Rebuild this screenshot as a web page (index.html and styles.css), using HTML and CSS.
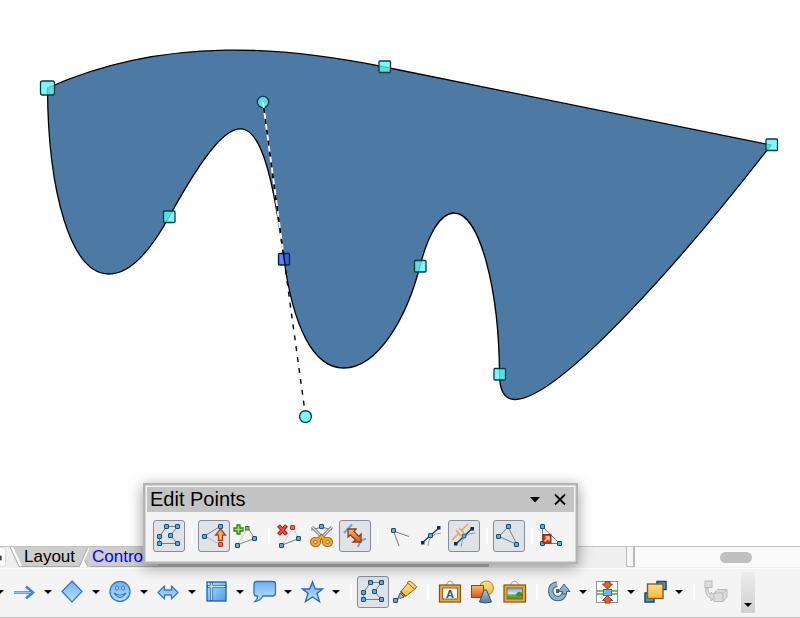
FILE: index.html
```
<!DOCTYPE html>
<html lang="en">
<head>
  <meta charset="utf-8" />
  <meta name="viewport" content="width=device-width,initial-scale=1" />
  <title>Edit Points</title>
  <link rel="stylesheet" href="styles.css">
</head>

<body>
  <!-- shared gradients and symbols -->
  <svg class="defs" aria-hidden="true">
    <defs>
      <linearGradient id="blue" x1="0" y1="0" x2="0" y2="1">
        <stop offset="0" stop-color="#74b2ee"/><stop offset="1" stop-color="#b4e4fb"/>
      </linearGradient>
      <linearGradient id="sky" x1="0" y1="0" x2="1" y2="1">
        <stop offset="0" stop-color="#b5e3fa"/><stop offset="1" stop-color="#4b9ce2"/>
      </linearGradient>
      <linearGradient id="gold" x1="0" y1="0" x2="0" y2="1">
        <stop offset="0" stop-color="#fbe08a"/><stop offset="1" stop-color="#f5b73c"/>
      </linearGradient>
      <linearGradient id="orange" x1="0" y1="0" x2="0" y2="1">
        <stop offset="0" stop-color="#fbbd6c"/><stop offset="1" stop-color="#d9531e"/>
      </linearGradient>
      <linearGradient id="steel" x1="0" y1="0" x2="0" y2="1">
        <stop offset="0" stop-color="#a9c8dd"/><stop offset="1" stop-color="#527b9b"/>
      </linearGradient>
      <linearGradient id="scene" x1="0" y1="0" x2="0" y2="1">
        <stop offset="0" stop-color="#62ace4"/><stop offset=".55" stop-color="#dceef4"/><stop offset=".6" stop-color="#7db549"/><stop offset="1" stop-color="#4b8728"/>
      </linearGradient>
    </defs>
    <symbol id="nd" viewBox="0 0 5 5"><rect x=".5" y=".5" width="4" height="4" rx=".5" fill="#5fa9d3" stroke="#1d4c70"/></symbol>
    <symbol id="nd-red" viewBox="0 0 5 5"><rect x=".5" y=".5" width="4" height="4" rx=".5" fill="#ee6a4c" stroke="#a92f1c"/></symbol>
    <symbol id="points" viewBox="0 0 24 24">
      <path d="M9.500 2.500H20.500L13.500 11.500 20.500 19.500H2.500V12.500Z" fill="none" stroke="#777e86"/>
      <use href="#nd" x="7" y="0" width="5" height="5"/><use href="#nd" x="18" y="0" width="5" height="5"/>
      <use href="#nd" x="11" y="9" width="5" height="5"/><use href="#nd" x="18" y="17" width="5" height="5"/>
      <use href="#nd" x="0" y="17" width="5" height="5"/><use href="#nd" x="0" y="10" width="5" height="5"/>
    </symbol>
  </svg>

  <main class="app">
    <svg class="canvas" viewBox="0 0 800 546" role="img" aria-label="Bezier curve">
      <path class="shape" d="M47.5 88C168 34 290 48 384.5 67L771 145C690 250 560 399.5 515 399.5C505 399.5 499.5 391 499.5 374C499 290 480 213 454 213C440 213 428 235 420 266C408 313 380 368 343.5 368C313 368 293 326 284 259C263 102 241 86 169 217C152 248 131 274 109 274C70 274 48 190 47.5 88Z"/>
      <g class="handle">
        <rect x="40.500" y="81" width="14" height="14" rx="2"/>
        <rect x="379" y="61" width="11.500" height="11.500" rx="1"/>
        <rect x="766" y="139" width="11.500" height="11.500" rx="1"/>
        <rect x="163.500" y="211" width="11.500" height="11.500" rx="1"/>
        <rect x="414.500" y="260.500" width="11.500" height="11.500" rx="1"/>
        <rect x="494" y="368.500" width="11.500" height="11.500" rx="1"/>
        <circle cx="263" cy="102" r="5.700"/>
        <circle cx="305.500" cy="416.500" r="5.900"/>
      </g>
      <g class="handle-lines">
        <path class="under" d="M263 102L284 259"/>
        <path class="dash near" d="M263 102L284 259"/>
        <path class="dash" d="M284 259L305 412"/>
      </g>
      <rect class="selected" x="278.500" y="253.500" width="11" height="11.500" rx="1"/>
      <path d="M279.500 254.500H283.500L284.500 264H279.500Z" fill="#5f88f0"/>
      <path d="M283.500 253.500L285 265" stroke="#05102c" stroke-width="1.500"/>
    </svg>

    <div class="tabbar">
      <button class="tab-end" aria-label="Last layer"><svg viewBox="0 0 5 20"><rect y="8" width="1.500" height="5" fill="#222"/></svg></button>
      <svg class="sep first" viewBox="0 0 14 20"><path d="M3 0H14V20H11Z" fill="#cecece"/><path d="M1 0L10 19.500H14" fill="none" stroke="#aaa"/><path d="M3 0L12 19" fill="none" stroke="#fff" stroke-width="2"/></svg>
      <button class="tab">Layout</button>
      <svg class="sep" viewBox="0 0 12 20"><rect width="12" height="20" fill="#cecece"/><path d="M6 14L2 20H10Z" fill="#f4f4f4"/><path d="M1 20L10 0M6 12L10 20" fill="none" stroke="#aaa"/><path d="M2.500 20L11 1M5 14L8 20" fill="none" stroke="#fff" stroke-width="1.500"/></svg>
      <button class="tab current">Controls</button>
      <div class="tab-rest"></div>
      <div class="tab-space"></div>
      <div class="splitter"></div>
      <div class="scroll"><div class="thumb"></div></div>
    </div>

    <div class="toolbar">
      <button class="caret lead" aria-label="More lines"></button>
      <button class="tool" aria-label="Arrow"><svg viewBox="0 0 24 24"><path d="M2 12.500H20M14 6.500L21 12.500L14 18.500" fill="none" stroke="#3e86d2" stroke-width="2.600"/><path d="M2 12.500H19" stroke="#8cc8f5"/></svg></button>
      <button class="caret" aria-label="Arrow options"></button>
      <button class="tool" aria-label="Basic shapes"><svg viewBox="0 0 24 24"><path d="M12 1L22 11.500L12 22L2 11.500Z" fill="url(#blue)" stroke="#3570b8" stroke-width="1.200"/></svg></button>
      <button class="caret" aria-label="Basic shape options"></button>
      <button class="tool" aria-label="Symbol shapes"><svg viewBox="0 0 24 24"><circle cx="12" cy="11.500" r="10" fill="url(#blue)" stroke="#3b78c0" stroke-width="1.300"/><path d="M6 13Q12 22 18 13Q12 17 6 13Z" fill="#8fcaf3" stroke="#3b78c0" stroke-width="1.200"/><ellipse cx="9" cy="8" rx="1.500" ry="2.200" fill="#a8d7f7" stroke="#3b78c0"/><ellipse cx="15" cy="8" rx="1.500" ry="2.200" fill="#a8d7f7" stroke="#3b78c0"/></svg></button>
      <button class="caret" aria-label="Symbol options"></button>
      <button class="tool" aria-label="Block arrows"><svg viewBox="0 0 24 24"><path d="M2 12.500L8.500 6V10H15.500V6L22 12.500L15.500 19V15H8.500V19Z" fill="url(#blue)" stroke="#3b78c0" stroke-width="1.300" stroke-linejoin="round"/></svg></button>
      <button class="caret" aria-label="Block arrow options"></button>
      <button class="tool" aria-label="Flowchart"><svg viewBox="0 0 24 24"><rect x="3" y="2" width="19" height="19" fill="url(#sky)" stroke="#245fac" stroke-width="1.300"/><path d="M7.500 2V21M3 6.500H22" stroke="#245fac" stroke-width="2.800"/><path d="M7.500 3V20M4 6.500H21" stroke="#c7edff" stroke-width="1.400"/></svg></button>
      <button class="caret" aria-label="Flowchart options"></button>
      <button class="tool" aria-label="Callouts"><svg viewBox="0 0 24 24"><path d="M4.500 1.500H20.500Q23.500 1.500 23.500 4V13Q23.500 16 20.500 16H11Q8 21 3 21.500Q6 19 5.500 16H4.500Q2 16 2 13V4Q2 1.500 4.500 1.500Z" fill="url(#blue)" stroke="#3571b9" stroke-width="1.300"/></svg></button>
      <button class="caret" aria-label="Callout options"></button>
      <button class="tool" aria-label="Stars"><svg viewBox="0 0 24 24"><path d="M12.500 2L15.300 9H22.500L17 13.500L19.500 21.500L12.500 17L5.500 21.500L8 13.500L2.500 9H9.700Z" fill="url(#blue)" stroke="#2d68b5" stroke-width="1.400"/></svg></button>
      <button class="caret" aria-label="Star options"></button>
      <span class="divider"></span>
      <button class="tool on" aria-label="Points" aria-pressed="true"><svg viewBox="0 0 24 24"><use href="#points"/></svg></button>
      <button class="tool" aria-label="Glue points"><svg viewBox="0 0 24 24"><path d="M3 21L7 16" stroke="#637d92" stroke-width="2"/><path d="M7 13L11 17L7 18.500L5.500 17Z" fill="#a6bac9" stroke="#435f75"/><path d="M8 11.500L15 3L22 9L12.500 16.500Z" fill="url(#gold)" stroke="#956115"/><path d="M14 2.500L17 1L23.500 6.500L22 9.500Z" fill="#f9d67c" stroke="#956115"/><path d="M7.500 11.500L12.500 16.500" stroke="#774b14" stroke-width="1.500"/><use href="#nd" x="0" y="18" width="5" height="5"/></svg></button>
      <span class="divider"></span>
      <button class="tool" aria-label="Fontwork"><svg viewBox="0 0 24 24"><path d="M8 5Q12-3 16 5" fill="none" stroke="#9ba3a9"/><rect x="1.500" y="5" width="21" height="17" fill="#e5ab43" stroke="#87500f" stroke-width="1.200"/><rect x="4.500" y="8" width="15" height="11" fill="#f2f8fc" stroke="#9a6320"/><text class="frame-letter" x="12" y="17.500" text-anchor="middle">A</text></svg></button>
      <button class="tool" aria-label="Gallery shapes"><svg viewBox="0 0 24 24"><circle cx="16.500" cy="8" r="7" fill="url(#gold)" stroke="#b9842c"/><rect x="1.500" y="5.500" width="12" height="12" fill="url(#orange)" stroke="#9c401b"/><path d="M14 10H16.500L21.500 22Q15 24 9.500 22Z" fill="url(#steel)" stroke="#2e5673"/></svg></button>
      <button class="tool" aria-label="Insert picture"><svg viewBox="0 0 24 24"><path d="M8 5Q12.500-3 17 5" fill="none" stroke="#9ba3a9"/><rect x="2" y="5" width="21.500" height="17" fill="#e5ab43" stroke="#87500f" stroke-width="1.200"/><rect x="5" y="8" width="15.500" height="11" fill="url(#scene)" stroke="#9a6320"/><path d="M14 14Q17 10 20 13V16H14Z" fill="#4b8728"/></svg></button>
      <span class="divider"></span>
      <button class="tool" aria-label="Rotate"><svg viewBox="0 0 24 24"><path d="M10 4Q3 5.500 3.800 12Q5 18.500 11 18.500Q16.500 18.500 17.500 12" fill="none" stroke="#41637e" stroke-width="5.500"/><path d="M10 4Q3 5.500 3.800 12Q5 18.500 11 18.500Q16.500 18.500 17.500 12" fill="none" stroke="#8db0c9" stroke-width="3.500"/><path d="M11.500 11.500L17 4L23 11.500H19.500V14H15.500V11.500Z" fill="#8db0c9" stroke="#41637e"/><path d="M10.500 9V13" stroke="#41637e" stroke-width="3"/></svg></button>
      <button class="caret" aria-label="Rotate options"></button>
      <button class="tool" aria-label="Align"><svg viewBox="0 0 24 24"><rect x="1.500" y="1.500" width="21" height="21" fill="#fff" stroke="#8d9296"/><path d="M12.500 1V23" stroke="#8d9296"/><path d="M2 11H23M2 14H23" stroke="#58a432" stroke-width="1.500"/><rect x="8.500" y="9.500" width="8" height="6" fill="#69b8f2" stroke="#2b79bd"/><path d="M10 1.500H15V4H17.500L12.500 9L7.500 4H10ZM10 23H15V20.500H17.500L12.500 15.500L7.500 20.500H10Z" fill="#e5622d" stroke="#9b3519"/></svg></button>
      <button class="caret" aria-label="Align options"></button>
      <button class="tool" aria-label="Arrange"><svg viewBox="0 0 24 24"><rect x="14" y="1.500" width="9" height="8" fill="#5797bd" stroke="#17466b" stroke-width="1.500"/><rect x="2" y="13" width="9" height="9" fill="#5797bd" stroke="#17466b" stroke-width="1.500"/><rect x="4.500" y="4" width="15.500" height="14.500" fill="url(#gold)" stroke="#945713" stroke-width="1.400"/></svg></button>
      <button class="caret" aria-label="Arrange options"></button>
      <span class="divider"></span>
      <button class="tool" aria-label="Extrusion" disabled><svg viewBox="0 0 24 24"><g fill="#dcdcdc" stroke="#b9b9b9"><rect x="1" y="1" width="7" height="6.500"/><path d="M1.500 8H4Q4 14 7 14.500V12L12 16.500L7 21V18Q1.500 17 1.500 8Z"/><path d="M10 13L14 9.500H23V17L19 21.500H10ZM10 13H19V21.500M19 13L23 9.500"/></g></svg></button>
      <button class="overflow" aria-label="More tools"></button>
    </div>

    <section class="window" aria-label="Edit Points">
      <header class="titlebar">
        <h1>Edit Points</h1>
        <button class="title-btn" aria-label="Menu"><svg viewBox="0 0 14 14"><path d="M2 4H12L7 9.500Z" fill="#000"/></svg></button>
        <button class="title-btn" aria-label="Close"><svg viewBox="0 0 14 14"><path d="M2 1.500L12 11.500M12 1.500L2 11.500" stroke="#000" stroke-width="1.800"/></svg></button>
      </header>
      <div class="tools">
        <button class="tool on" aria-label="Points" aria-pressed="true"><svg viewBox="0 0 24 24"><use href="#points"/></svg></button>
        <span class="divider"></span>
        <button class="tool on" aria-label="Move points" aria-pressed="true"><svg viewBox="0 0 24 24"><path d="M18 2.500L2.500 12" stroke="#777e86"/><path d="M2.500 12L18 20.500" stroke="#a3a7ac" stroke-dasharray="2 1"/><use href="#nd" x="16" y="0" width="5" height="5"/><use href="#nd" x="0" y="10" width="5" height="5"/><use href="#nd-red" x="16" y="18" width="5" height="5"/><path d="M18.500 5L23.500 11H20.500V16.500H16.500V11H13.500Z" fill="#f8b25e" stroke="#98471d" stroke-width="1.300"/></svg></button>
        <button class="tool" aria-label="Insert points"><svg viewBox="0 0 24 24"><path d="M14 4L20.500 14.500L3 21" fill="none" stroke="#888"/><path d="M3 21L14 4" stroke="#ccc"/><use href="#nd" x="18" y="12" width="5" height="5"/><use href="#nd" x="1" y="19" width="5" height="5"/><rect x="11.500" y="2.500" width="3.500" height="3.500" fill="#83c057" stroke="#3e7d22"/><path d="M3 1H6V4H9V7H6V10H3V7H0V4H3Z" fill="#a6df6c" stroke="#398012" stroke-width="1.300"/></svg></button>
        <span class="divider"></span>
        <button class="tool" aria-label="Delete points"><svg viewBox="0 0 24 24"><path d="M3 21L20 14.500" stroke="#777"/><path d="M3 21L14 4L20 14.500" fill="none" stroke="#bbb" stroke-dasharray="2 1"/><use href="#nd" x="17" y="12" width="5" height="5"/><use href="#nd" x="0" y="19" width="5" height="5"/><use href="#nd-red" x="11" y="1" width="5" height="5"/><path d="M-.500 1.500L7.500 10.500M7.500 1.500L-.500 10.500" stroke="#a91816" stroke-width="4"/><path d="M0 2L7 10M7 2L0 10" stroke="#ee4c3b" stroke-width="2"/></svg></button>
        <button class="tool" aria-label="Split curve"><svg viewBox="0 0 24 24"><path d="M0 6L11 3L21 6" fill="none" stroke="#777"/><path d="M1 3L14 16M21 3L8 16" stroke="#637079" stroke-width="3"/><path d="M1 3L14 16M21 3L8 16" stroke="#dfe5e8" stroke-width="1.300"/><g fill="none" stroke="#a65f0e" stroke-width="4.200"><ellipse cx="4.500" cy="18" rx="3.500" ry="3"/><ellipse cx="16.500" cy="18" rx="3.500" ry="3"/><path d="M7 16L10.500 12.500L14 16"/></g><g fill="none" stroke="#f1a331" stroke-width="2.600"><ellipse cx="4.500" cy="18" rx="3.500" ry="3"/><ellipse cx="16.500" cy="18" rx="3.500" ry="3"/><path d="M7 16L10.500 12.500L14 16"/></g><use href="#nd" x="8" y="0" width="5" height="5"/></svg></button>
        <button class="tool on" aria-label="Convert to curve" aria-pressed="true"><svg viewBox="0 0 24 24"><path d="M1 9L9 .500" stroke="#65a6e4" stroke-width="2"/><path d="M15 23Q17 15 23 15" fill="none" stroke="#65a6e4" stroke-width="2"/><path d="M5 5H13L11 7.500L16 12.500L18 10V18H10L12.500 16L7.500 11L5 13Z" fill="url(#orange)" stroke="#9a3818" stroke-width="1.300"/></svg></button>
        <span class="divider"></span>
        <button class="tool" aria-label="Corner point"><svg viewBox="0 0 24 24"><path d="M21 12.500L5.500 7L11 22" fill="none" stroke="#777"/><use href="#nd" x="3" y="4" width="5" height="5"/></svg></button>
        <button class="tool" aria-label="Smooth transition"><svg viewBox="0 0 24 24"><path d="M8 22Q8 10 21 9" fill="none" stroke="#999"/><path d="M2.500 18.500L19 4" stroke="#17426b" stroke-width="1.500"/><use href="#nd" x="8" y="9" width="5" height="5"/><rect x="1" y="17" width="3.500" height="3.500" fill="#102e55"/><rect x="17" y="2" width="3.500" height="3.500" fill="#102e55"/></svg></button>
        <button class="tool on" aria-label="Symmetric transition" aria-pressed="true"><svg viewBox="0 0 24 24"><path d="M9 23Q10 9 23 9" fill="none" stroke="#999"/><path d="M4 20L20 4.500" stroke="#17426b" stroke-width="1.500"/><use href="#nd" x="9.500" y="9.500" width="5" height="5"/><rect x="2" y="18" width="3.500" height="3.500" fill="#102e55"/><rect x="18.500" y="3" width="3.500" height="3.500" fill="#102e55"/><path d="M0 16L7 9M9 7L16 0M4 6L9 12M7 4L12 9" stroke="#f09a45" stroke-width="1.300"/></svg></button>
        <span class="divider"></span>
        <button class="tool on" aria-label="Close Bezier" aria-pressed="true"><svg viewBox="0 0 24 24"><path d="M11 3L2 12.500L20 20.500Z" fill="none" stroke="#777e86"/><use href="#nd" x="9" y="0" width="5" height="5"/><use href="#nd" x="-1" y="10" width="5" height="5"/><use href="#nd" x="17" y="18" width="5" height="5"/></svg></button>
        <span class="divider"></span>
        <button class="tool" aria-label="Eliminate points"><svg viewBox="0 0 24 24"><path d="M.500 2.500V19.500H17.500Z" fill="none" stroke="#777"/><use href="#nd" x="-2" y="0" width="5" height="5"/><use href="#nd" x="-2" y="17" width="5" height="5"/><use href="#nd" x="15" y="17" width="5" height="5"/><rect x="1" y="10.500" width="8" height="8.500" fill="#d63b19" stroke="#8f210f"/><path d="M2.500 17.500L6 14M3.500 13H7V16.500" fill="none" stroke="#ffd0a8" stroke-width="1.500"/></svg></button>
      </div>
    </section>
  </main>
</body>
</html>
```
FILE: styles.css
```
:root{
  --bar:#f4f4f4;
  --tab:#cecece;
  --line:#b9b9b9;
}

*{box-sizing:border-box}
html,body{height:100%}
body{
  margin:0;
  font-family:"Liberation Sans",Arial,sans-serif;
  background:#fff; color:#000;
}
button{
  margin:0; padding:0; border:0; background:none; color:inherit;
  font:inherit; flex:none; cursor:pointer;
}

.defs{position:absolute;width:0;height:0}

.app{
  position:relative; display:flex; flex-direction:column;
  height:100vh; overflow:hidden;
}

/* drawing area */
.canvas{display:block;flex:1;width:100%;min-height:0}
.shape{fill:#4d7aa5;stroke:#000;stroke-width:1.3}
.handle-lines{fill:none;stroke-width:1.4}
.handle-lines .under{stroke:#fff;stroke-width:1.8}
.dash{stroke:#000;stroke-dasharray:5 6}
.dash.near{stroke-width:1.8;stroke-dashoffset:5}
.handle{fill:#5ff5f5;fill-opacity:.8;stroke:#063c3c;stroke-width:1.3}
.selected{fill:#2d63e8;stroke:#0a1a4a;stroke-width:1.3}

/* layer tabs and scrollbar */
.tabbar{
  display:flex; flex:none; height:22px; padding-bottom:1px;
  background:#efefef; border-top:1px solid #c4c4c4;
}
.tab-end{
  width:6px; background:#fff; border-radius:0 4px 4px 0;
  border:1px solid #ddd; border-left:0;
}
.tab-end svg{display:block;width:5px;height:19px}
.sep{display:block;flex:none;width:12px;height:20px}
.sep.first{width:14px;margin-left:3px}
.tab{
  height:20px; background:var(--tab); border-bottom:1px solid #aaa;
  font-size:17px; line-height:18px; padding:0 3px 0 1px;
}
.tab.current{color:#00f;padding-left:2px}
.tab-rest{flex:0 1 332px;height:20px;background:#b4b4b4}
.tab-space{flex:1 1 138px}
.splitter{
  flex:none; width:9px; height:20px; background:#f6f6f6;
  border:2px solid #bbb; border-width:0 2px 1px 1px;
}
.scroll{
  flex:0 1 165px; display:flex; align-items:center; justify-content:flex-end;
  background:#fafafa; padding-right:48px;
}
.thumb{width:32px;height:11px;border-radius:6px;background:#c0c0c0}

/* drawing toolbar */
.toolbar{
  display:flex; flex:none; align-items:center; height:50px; padding-bottom:2px;
  background:var(--bar); border-top:1px solid #fbfbfb; border-bottom:1px solid var(--line);
}
.tool{
  display:flex; align-items:center; justify-content:center;
  width:32px; height:32px; border:1px solid transparent; border-radius:3px;
}
.tool.on{background:#dfe2e7;border-color:#868b9b}
.tool svg{display:block;flex:none;width:24px;height:24px;overflow:visible}
.frame-letter{font:bold 11px "Liberation Sans",Arial,sans-serif;fill:#31566f}
.divider{flex:none;width:13px;height:16px;display:flex;justify-content:center}
.divider::after{content:"";width:2px;background:#fff}
.caret{width:16px;height:32px;display:flex;align-items:center;justify-content:center}
.caret::after,.overflow::after{
  content:""; border:4px solid transparent; border-top-color:#000; border-bottom:0;
}
.lead{margin-left:-8px}
.overflow{
  display:flex; align-items:flex-end; justify-content:center;
  width:14px; height:41px; padding-bottom:6px; margin-left:9px;
  background:linear-gradient(#ececec,#cfcfcf);
}

/* floating tool window */
.window{
  position:absolute; left:143px; bottom:54px; width:435px;
  background:var(--bar); border:2px solid #b4b4b4;
  outline:1px solid #d6d6d6; outline-offset:-3px;
  box-shadow:0 3px 14px rgba(0,0,0,.4);
  padding:2px;
}
.titlebar{
  display:flex; align-items:center; gap:11px; height:25px;
  padding:0 7px 0 3px; background:#c3c3c3;
}
.titlebar h1{flex:1;margin:0;font-size:20px;font-weight:400;line-height:25px}
.title-btn{width:14px;height:14px}
.title-btn svg{display:block}
.tools{display:flex;align-items:center;height:48px;padding:0 6px}
```
